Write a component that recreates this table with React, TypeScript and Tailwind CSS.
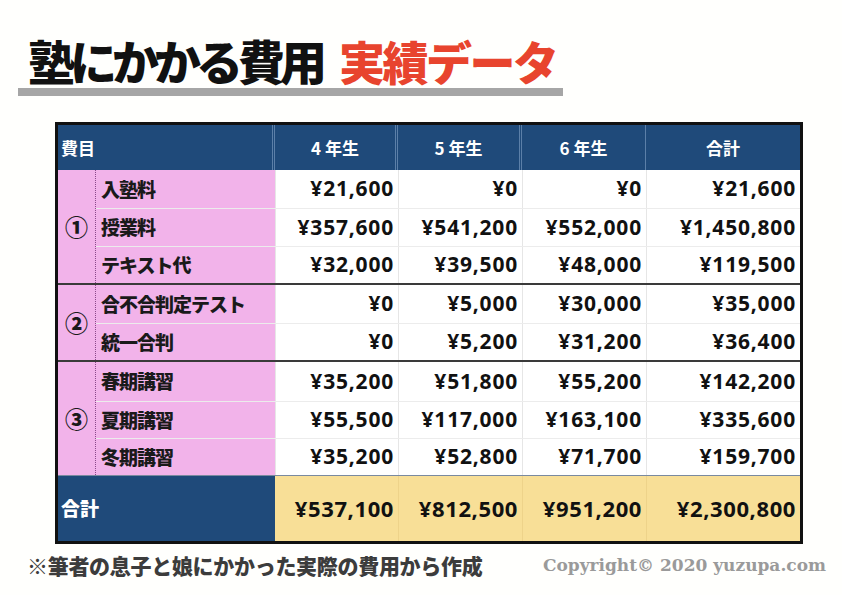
import React from "react";

const jp = { fontFamily: '"Noto Sans CJK JP", "Noto Sans", sans-serif' };
const num = { fontFamily: '"Open Sans", "Noto Sans", sans-serif' };

type Row = { label: string; v: string[] };
const groups: { mark: string; rows: Row[] }[] = [
  {
    mark: "①",
    rows: [
      { label: "入塾料", v: ["¥21,600", "¥0", "¥0", "¥21,600"] },
      { label: "授業料", v: ["¥357,600", "¥541,200", "¥552,000", "¥1,450,800"] },
      { label: "テキスト代", v: ["¥32,000", "¥39,500", "¥48,000", "¥119,500"] },
    ],
  },
  {
    mark: "②",
    rows: [
      { label: "合不合判定テスト", v: ["¥0", "¥5,000", "¥30,000", "¥35,000"] },
      { label: "統一合判", v: ["¥0", "¥5,200", "¥31,200", "¥36,400"] },
    ],
  },
  {
    mark: "③",
    rows: [
      { label: "春期講習", v: ["¥35,200", "¥51,800", "¥55,200", "¥142,200"] },
      { label: "夏期講習", v: ["¥55,500", "¥117,000", "¥163,100", "¥335,600"] },
      { label: "冬期講習", v: ["¥35,200", "¥52,800", "¥71,700", "¥159,700"] },
    ],
  },
];

function Group({ mark, rows, heights }: { mark: string; rows: Row[]; heights: number[] }) {
  return (
    <div className="flex">
      <div className="w-[38px] bg-[#f2b3ea] border-r border-dotted border-[#8a4a8a] flex items-center justify-center text-[23px] font-black text-[#1a1a1a]" style={jp}>
        {mark}
      </div>
      <div className="flex-1 flex flex-col">
        {rows.map((r, i) => (
          <div key={r.label} className={`flex ${i > 0 ? "border-t border-[#ececec]" : ""}`} style={{ height: heights[i] - (i > 0 ? 1 : 0) }}>
            <div className="w-[179px] bg-[#f2b3ea] flex items-center pl-[5px] text-[19px] font-black text-[#1a1a1a] tracking-[-1px]" style={jp}>
              {r.label}
            </div>
            {r.v.map((v, j) => (
              <div
                key={j}
                className={`${["w-[123px]", "w-[124px]", "w-[124px]", "w-[154px]"][j]} bg-white border-l border-[#e6e6e6] first:border-l-0 flex items-center justify-end pr-[4px] text-[21px] font-bold tracking-[0.8px] text-[#111]`}
                style={num}
              >
                {v}
              </div>
            ))}
          </div>
        ))}
      </div>
    </div>
  );
}

export default function App() {
  return (
    <div className="w-[842px] h-[595px] bg-[#fffffd] relative overflow-hidden">
      <div className="pt-[28px] pl-[18px]">
        <div className="w-[545px]">
          <div className="flex items-end pl-[10px] h-[55px] leading-none" style={jp}>
            <span className="text-[47px] font-black text-[#111] tracking-[-5px] leading-none">塾にかかる費用</span>
            <span className="text-[46px] font-black text-[#e8442e] ml-[17px] tracking-[-2.5px] leading-none">実績データ</span>
          </div>
          <div className="h-[8px] bg-[#a6a6a6] mt-[5px]" />
        </div>
      </div>

      <div className="ml-[55px] mt-[26px] w-[748px] border-[3px] border-[#111] bg-white">
        <div className="flex h-[45px] bg-[#1f4a7a] text-white text-[17px] font-bold" style={jp}>
          <div className="w-[217px] flex items-center pl-[3px] border-r-[3px] border-double border-[#5b7fa8]">費目</div>
          <div className="w-[123px] flex items-center justify-center border-r-[3px] border-double border-[#5b7fa8]">4 年生</div>
          <div className="w-[124px] flex items-center justify-center border-r-[3px] border-double border-[#5b7fa8]">5 年生</div>
          <div className="w-[124px] flex items-center justify-center border-r border-[#5b7fa8]">6 年生</div>
          <div className="flex-1 flex items-center justify-center">合計</div>
        </div>
        <Group mark={groups[0].mark} rows={groups[0].rows} heights={[38, 39, 38]} />
        <div className="border-t-2 border-[#3a3a3a]">
          <Group mark={groups[1].mark} rows={groups[1].rows} heights={[38, 38]} />
        </div>
        <div className="border-t-2 border-[#3a3a3a]">
          <Group mark={groups[2].mark} rows={groups[2].rows} heights={[39, 38, 38]} />
        </div>
        <div className="flex h-[66px] border-t border-[#7a8aa0]">
          <div className="w-[217px] bg-[#1f4a7a] text-white text-[19px] font-black flex items-center pl-[3px]" style={jp}>合計</div>
          {["¥537,100", "¥812,500", "¥951,200", "¥2,300,800"].map((v, j) => (
            <div
              key={j}
              className={`${["w-[123px]", "w-[124px]", "w-[124px]", "flex-1"][j]} bg-[#f8df97] ${j > 0 ? "border-l border-[#eed38a]" : ""} flex items-center justify-end pr-[4px] text-[22px] font-bold tracking-[0.6px] text-[#111]`}
              style={num}
            >
              {v}
            </div>
          ))}
        </div>
      </div>

      <div className="flex items-center justify-between pl-[27px] pr-[16px] mt-[6px]">
        <span className="text-[21px] font-black text-[#3c3c3c] tracking-[-0.3px]" style={jp}>
          ※筆者の息子と娘にかかった実際の費用から作成
        </span>
        <span className="text-[17px] font-bold text-[#9a9a9a]" style={{ fontFamily: '"DejaVu Serif", serif' }}>
          Copyright© 2020 yuzupa.com
        </span>
      </div>
    </div>
  );
}
